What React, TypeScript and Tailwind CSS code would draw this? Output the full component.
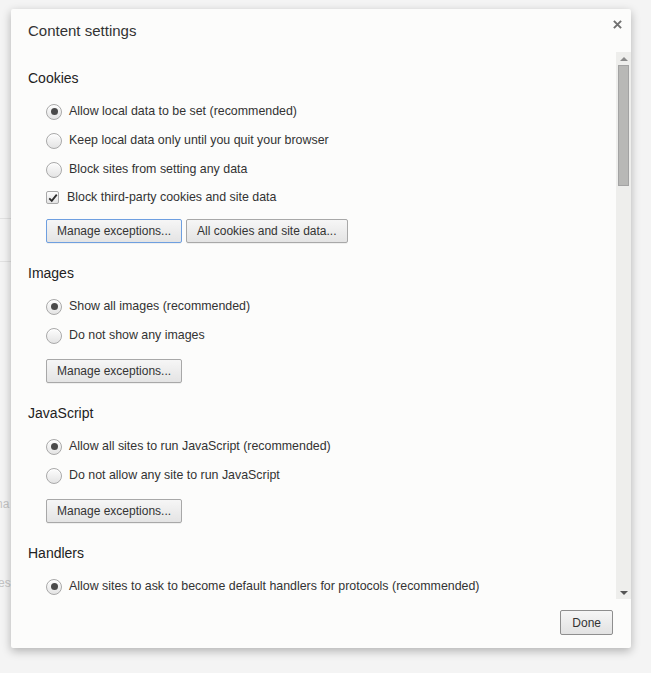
import React from "react";

const font = { fontFamily: '"Liberation Sans", Arial, sans-serif' };

function Radio({ checked, label }: { checked?: boolean; label: string }) {
  return (
    <div className="flex h-[29px] items-center pl-[18px]">
      <span className="flex h-[16px] w-[16px] items-center justify-center rounded-full border border-[#a9a9a9] bg-gradient-to-b from-[#fdfdfd] to-[#e4e4e4] shadow-[inset_0_1px_0_#fff]">
        {checked && <span className="h-[7px] w-[7px] rounded-full bg-[#4a4a4a]" />}
      </span>
      <span className="ml-[7px] text-[12.4px] text-[#333]">{label}</span>
    </div>
  );
}

function Checkbox({ label }: { label: string }) {
  return (
    <div className="flex h-[27px] items-center pl-[18px]">
      <span className="flex h-[13px] w-[13px] items-center justify-center rounded-[2px] border border-[#a9a9a9] bg-gradient-to-b from-[#fdfdfd] to-[#e4e4e4]">
        <svg viewBox="0 0 12 12" className="h-[10px] w-[10px]">
          <path d="M1.5 6.5 L4.5 9.5 L10.5 2" fill="none" stroke="#2e2e2e" strokeWidth="2.2" />
        </svg>
      </span>
      <span className="ml-[8px] text-[12.4px] text-[#333]">{label}</span>
    </div>
  );
}

function Button({ label, focused }: { label: string; focused?: boolean }) {
  return (
    <button
      className={
        focused
          ? "h-[24px] rounded-[2px] border border-[#6e9fe0] bg-gradient-to-b from-[#f6f6f6] to-[#e4e4e4] px-[10px] text-[12px] text-[#333] shadow-[0_1px_0_rgba(0,0,0,0.05)]"
          : "h-[24px] rounded-[2px] border border-[#a8a8a8] bg-gradient-to-b from-[#f6f6f6] to-[#e4e4e4] px-[10px] text-[12px] text-[#333] shadow-[0_1px_0_rgba(0,0,0,0.05)]"
      }
    >
      {label}
    </button>
  );
}

function SectionTitle({ children, first }: { children: React.ReactNode; first?: boolean }) {
  return (
    <div className={first ? "flex h-[26px] items-center text-[14px] text-[#222]" : "mt-[17px] flex h-[26px] items-center text-[14px] text-[#222]"}>
      {children}
    </div>
  );
}

export default function App() {
  return (
    <div className="relative h-[673px] w-[651px] overflow-hidden bg-[#f4f4f4]" style={font}>
      {/* page behind the dialog */}
      <div className="flex w-[400px] flex-col">
        <div className="h-[218px]" />
        <div className="h-[44px] border-y border-[#e2e2e2]" />
      </div>
      <div className="absolute left-[-4px] top-[495px] text-[12px] text-[#c4c4c4]">na</div>
      <div className="absolute left-[-2px] top-[574px] text-[12px] text-[#c4c4c4]">es</div>

      {/* dialog */}
      <div className="absolute left-[11px] top-[9px] flex h-[639px] w-[620px] flex-col rounded-[2px] bg-[#fcfcfb] shadow-[0_3px_10px_rgba(0,0,0,0.28)]">
        <div className="flex h-[43px] items-center justify-between pl-[17px] pr-[9px] pt-[1px]">
          <span className="text-[15px] text-[#333]">Content settings</span>
          <svg viewBox="0 0 10 10" className="mb-[14px] h-[9px] w-[9px]">
            <path d="M1 1 L9 9 M9 1 L1 9" stroke="#707070" strokeWidth="2.2" />
          </svg>
        </div>

        <div className="flex h-[547px]">
          <div className="flex-1 overflow-hidden pl-[17px] pt-[13px]">
            <SectionTitle first>Cookies</SectionTitle>
            <div className="mt-[6px]">
              <Radio checked label="Allow local data to be set (recommended)" />
              <Radio label="Keep local data only until you quit your browser" />
              <Radio label="Block sites from setting any data" />
              <Checkbox label="Block third-party cookies and site data" />
            </div>
            <div className="mt-[8px] flex gap-[4px] pl-[18px]">
              <Button focused label="Manage exceptions..." />
              <Button label="All cookies and site data..." />
            </div>

            <SectionTitle>Images</SectionTitle>
            <div className="mt-[6px]">
              <Radio checked label="Show all images (recommended)" />
              <Radio label="Do not show any images" />
            </div>
            <div className="mt-[8px] pl-[18px]">
              <Button label="Manage exceptions..." />
            </div>

            <SectionTitle>JavaScript</SectionTitle>
            <div className="mt-[6px]">
              <Radio checked label="Allow all sites to run JavaScript (recommended)" />
              <Radio label="Do not allow any site to run JavaScript" />
            </div>
            <div className="mt-[8px] pl-[18px]">
              <Button label="Manage exceptions..." />
            </div>

            <SectionTitle>Handlers</SectionTitle>
            <div className="mt-[6px]">
              <Radio checked label="Allow sites to ask to become default handlers for protocols (recommended)" />
            </div>
          </div>

          {/* scrollbar */}
          <div className="flex w-[15px] flex-col items-center bg-[#eeeeec]">
            <div className="flex h-[13px] items-center justify-center">
              <svg viewBox="0 0 8 4" className="h-[4px] w-[8px]">
                <path d="M0 4 L4 0 L8 4 Z" fill="#8a8a8a" />
              </svg>
            </div>
            <div className="h-[121px] w-[11px] border border-[#a3a3a3] bg-[#b8b8b6]" />
            <div className="flex-1" />
            <div className="flex h-[13px] items-center justify-center">
              <svg viewBox="0 0 8 4" className="h-[4px] w-[8px]">
                <path d="M0 0 L8 0 L4 4 Z" fill="#555" />
              </svg>
            </div>
          </div>
        </div>

        <div className="flex flex-1 items-start justify-end pr-[18px] pt-[11px]">
          <button className="h-[25px] rounded-[2px] border border-[#8e8e8e] bg-gradient-to-b from-[#f6f6f6] to-[#e2e2e2] px-[11px] text-[12px] text-[#333]">
            Done
          </button>
        </div>
      </div>
    </div>
  );
}
